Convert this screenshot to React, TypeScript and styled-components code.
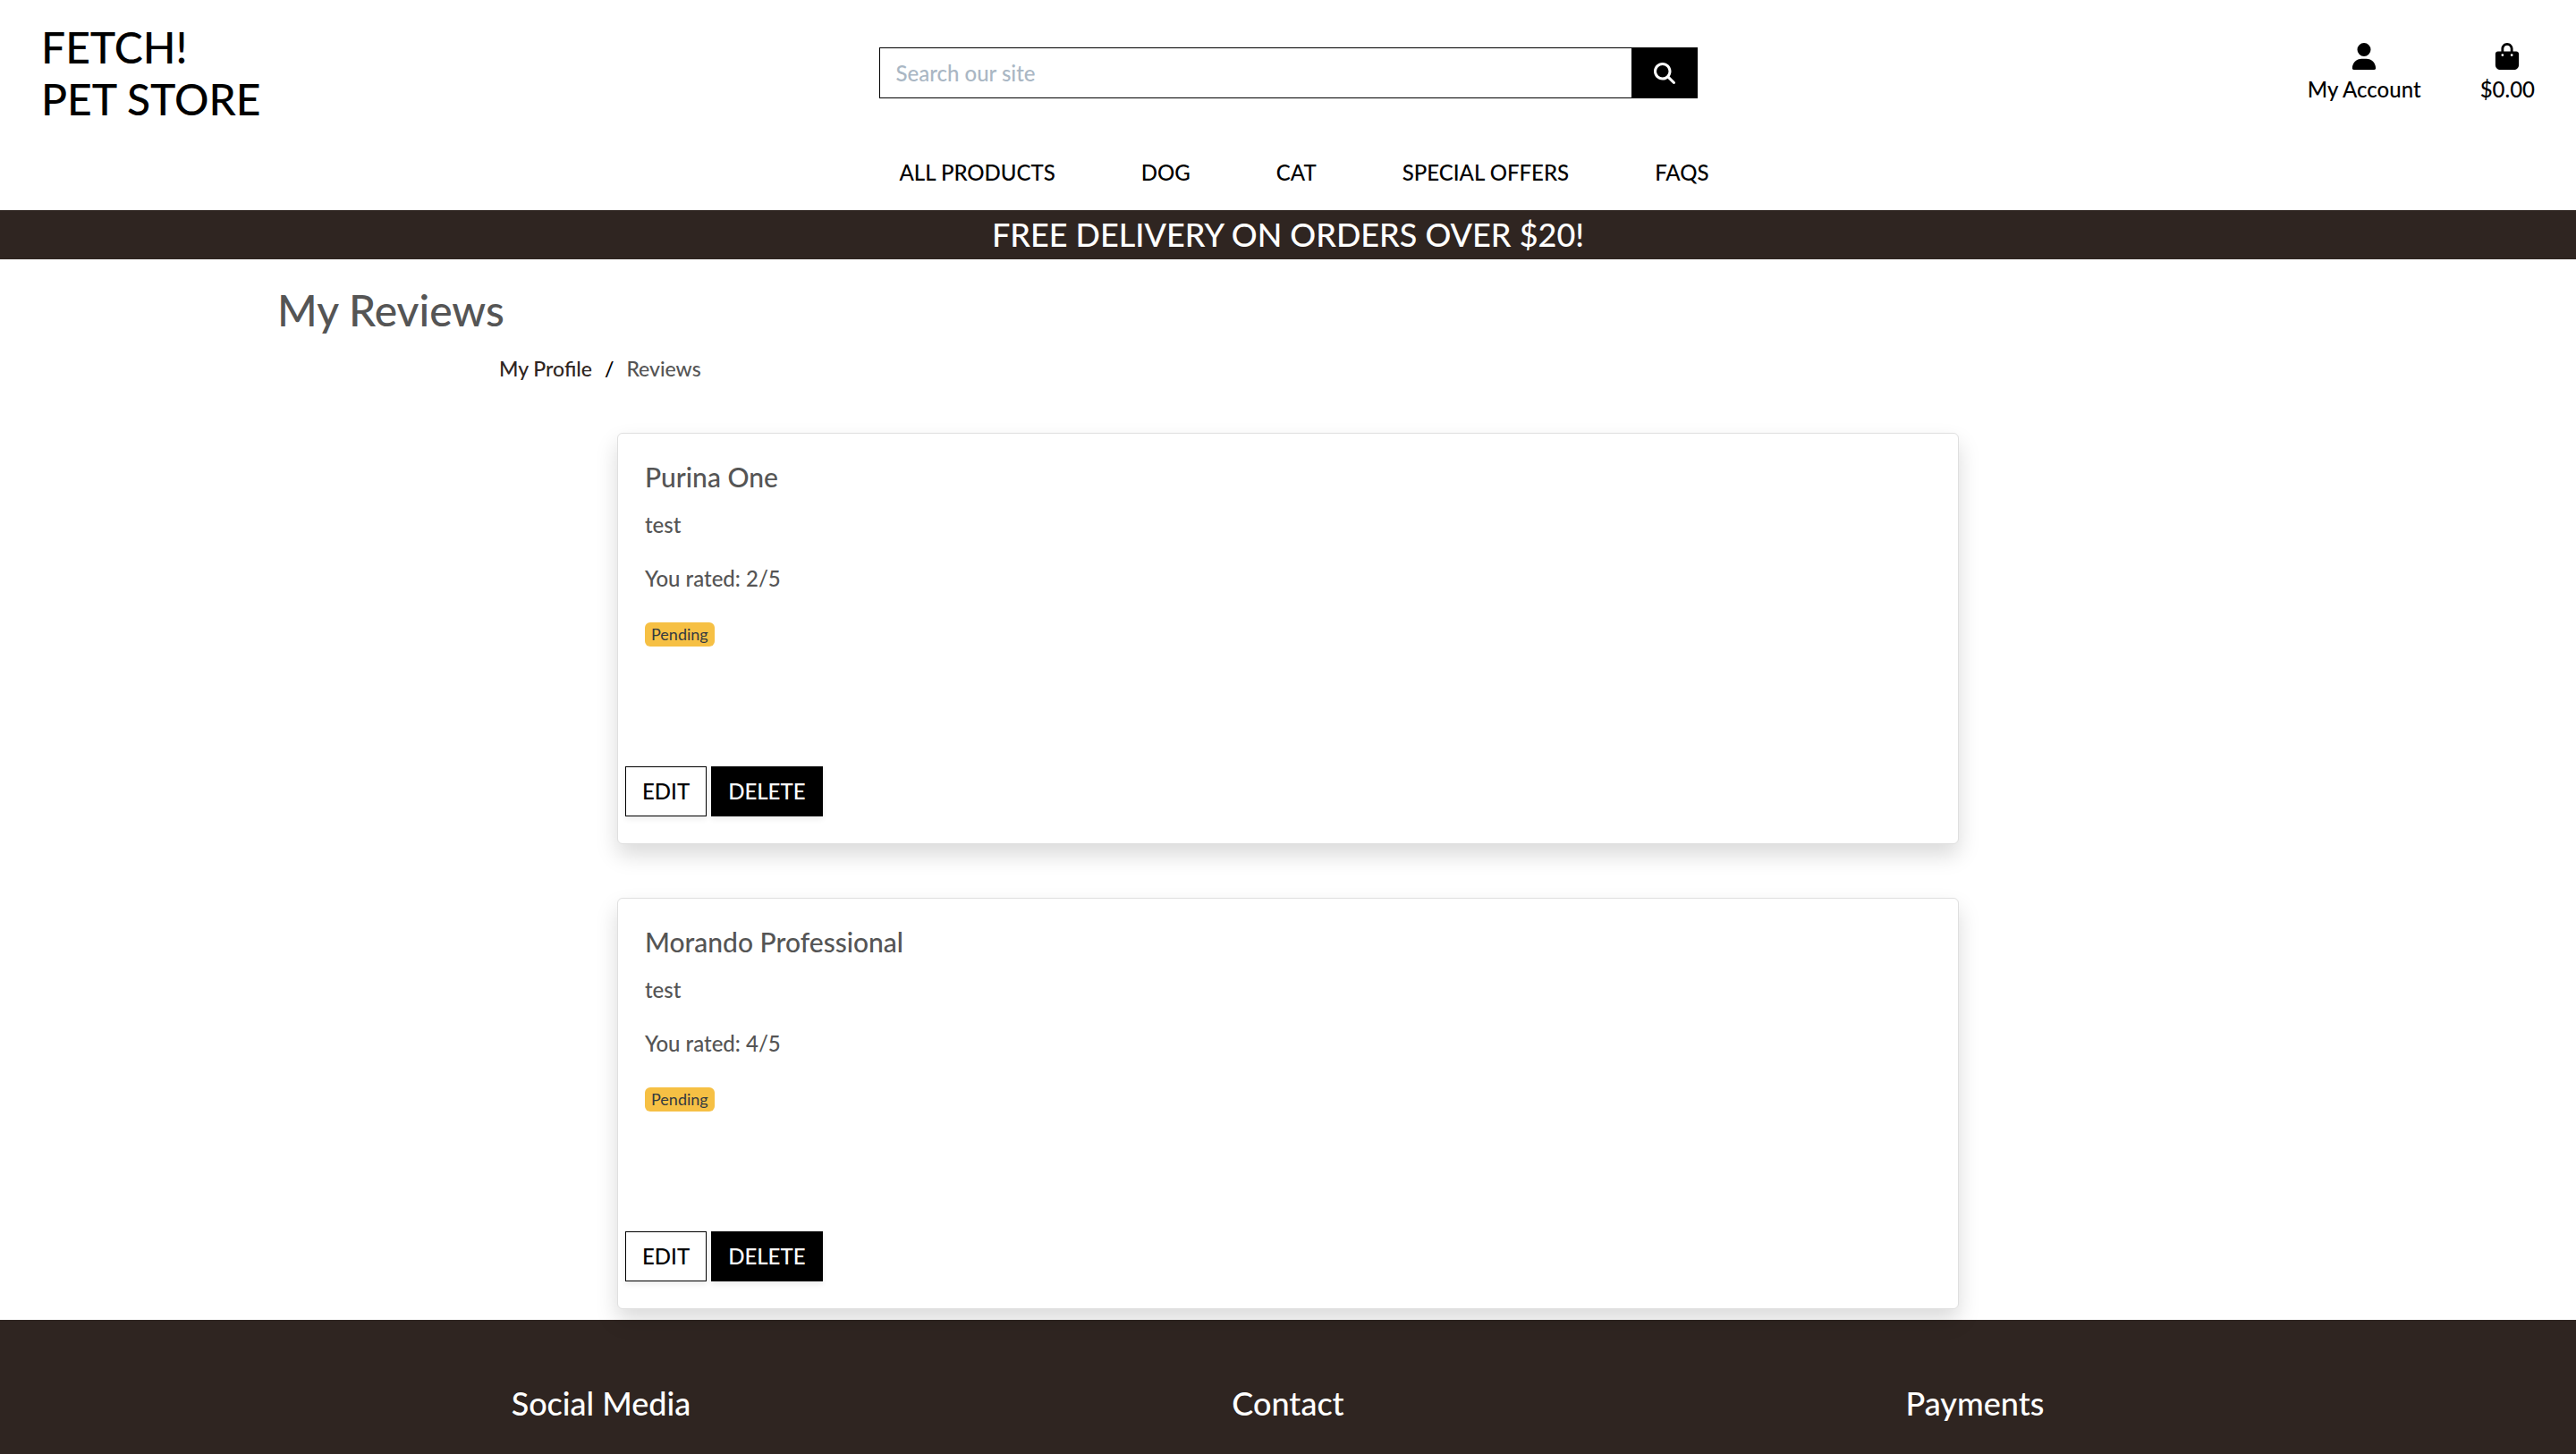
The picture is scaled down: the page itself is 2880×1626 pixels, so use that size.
import React from "react";
import styled, { createGlobalStyle } from "styled-components";
import { FaUser, FaBagShopping, FaMagnifyingGlass } from "react-icons/fa6";

const GlobalStyle = createGlobalStyle`
  *, *::before, *::after { box-sizing: border-box; }
  body {
    margin: 0;
    background: #fff;
    color: #555;
    font-family: Lato, "Open Sans", sans-serif;
    font-size: 24px;
    font-weight: 500;
    line-height: 36px;
  }
  h1, h2, h3, p, ul, ol { margin: 0; padding: 0; font-weight: inherit; }
  ul, ol { list-style: none; }
  a { color: inherit; text-decoration: none; }
  button, input { font: inherit; border-radius: 0; margin: 0; }
`;

const Page = styled.div`
  display: flex;
  flex-direction: column;
  min-height: 100vh;
`;

const Header = styled.header`
  display: flex;
  flex-direction: column;
  color: #000;
`;

const TopRow = styled.div`
  display: grid;
  grid-template-columns: 1fr minmax(300px, 915px) 1fr;
  align-items: start;
  padding: 24px 46px 0;
`;

const Brand = styled.a`
  justify-self: start;
  font-size: 48px;
  line-height: 58px;
`;

const SearchForm = styled.form`
  display: flex;
  height: 57px;
  margin-top: 29px;
`;

const SearchInput = styled.input`
  flex: 1;
  min-width: 0;
  padding: 9px 18px;
  border: 1px solid #000;
  border-right: 0;
  background: #fff;
  color: #495057;
  outline: none;
  &::placeholder {
    color: #aab7c4;
    opacity: 1;
  }
`;

const SearchButton = styled.button`
  display: flex;
  align-items: center;
  justify-content: center;
  width: 74px;
  padding: 0;
  border: 1px solid #000;
  background: #000;
  color: #fff;
  cursor: pointer;
`;

const UserLinks = styled.div`
  display: flex;
  justify-self: end;
  gap: 66px;
  padding-top: 24px;
`;

const UserLink = styled.a`
  display: flex;
  flex-direction: column;
  align-items: center;
  gap: 4px;
`;

const Nav = styled.nav`
  padding: 35px 0 24px 36px;
`;

const NavList = styled.ul`
  display: flex;
  justify-content: center;
  gap: 96px;
`;

const Banner = styled.p`
  padding: 6px;
  background: #2f2521;
  color: #fff;
  font-size: 36px;
  line-height: 43px;
  text-align: center;
`;

const Main = styled.main`
  display: flex;
  flex-direction: column;
  flex: 1;
  padding: 28px 0 12px;
`;

const PageTitle = styled.h1`
  margin-left: 310px;
  font-size: 48px;
  line-height: 58px;
`;

const Crumbs = styled.ol`
  display: flex;
  gap: 14px;
  margin: 18px 0 54px 558px;
  font-size: 23px;
`;

const Crumb = styled.li<{ $color?: string }>`
  color: ${(p) => p.$color ?? "inherit"};
`;

const Reviews = styled.section`
  display: flex;
  flex-direction: column;
  gap: 60px;
  width: 100%;
  max-width: 1500px;
  margin: 0 auto;
`;

const Card = styled.article`
  position: relative;
  padding-bottom: 30px;
  border: 1px solid #dfdfdf;
  border-radius: 6px;
  background: #fff;
  box-shadow: 0 12px 24px rgba(0, 0, 0, 0.15);
`;

const CardBody = styled.div`
  display: flex;
  flex-direction: column;
  align-items: flex-start;
  gap: 24px;
  min-height: 372px;
  padding: 30px;
`;

const CardTitle = styled.h2`
  margin-bottom: -6px;
  font-size: 30px;
`;

const Badge = styled.span`
  margin-top: 7px;
  padding: 4px 7px 5px;
  border-radius: 6px;
  background: #f6c044;
  color: #343a40;
  font-size: 18px;
  font-weight: 400;
  line-height: 18px;
`;

const Actions = styled.div`
  display: flex;
  gap: 5px;
  padding-left: 8px;
`;

const ActionButton = styled.button<{ $solid?: boolean }>`
  padding: 9px 18px;
  border: 1px solid #000;
  background: ${(p) => (p.$solid ? "#000" : "#fff")};
  color: ${(p) => (p.$solid ? "#fff" : "#000")};
  line-height: 36px;
  box-shadow: 0 3px 6px rgba(0, 0, 0, 0.075);
  cursor: pointer;
`;

const Footer = styled.footer`
  display: grid;
  grid-template-columns: repeat(3, 1fr);
  padding: 72px 10% 36px;
  background: #2f2521;
  color: #fff;
  text-align: center;
`;

const FooterTitle = styled.h3`
  font-size: 36px;
  line-height: 43px;
`;

const navItems = ["ALL PRODUCTS", "DOG", "CAT", "SPECIAL OFFERS", "FAQS"];
const footerItems = ["Social Media", "Contact", "Payments"];
const reviews = [
  { product: "Purina One", text: "test", rating: 2 },
  { product: "Morando Professional", text: "test", rating: 4 },
];

export default function App() {
  return (
    <Page>
      <GlobalStyle />
      <Header>
        <TopRow>
          <Brand href="#">
            FETCH!
            <br />
            PET STORE
          </Brand>
          <SearchForm role="search" onSubmit={(e) => e.preventDefault()}>
            <SearchInput type="text" aria-label="Search our site" placeholder="Search our site" />
            <SearchButton type="submit" aria-label="Search">
              <FaMagnifyingGlass size={24} />
            </SearchButton>
          </SearchForm>
          <UserLinks>
            <UserLink href="#">
              <FaUser size={30} />
              My Account
            </UserLink>
            <UserLink href="#">
              <FaBagShopping size={30} />
              $0.00
            </UserLink>
          </UserLinks>
        </TopRow>
        <Nav>
          <NavList>
            {navItems.map((item) => (
              <li key={item}>
                <a href="#">{item}</a>
              </li>
            ))}
          </NavList>
        </Nav>
      </Header>
      <Banner>FREE DELIVERY ON ORDERS OVER $20!</Banner>
      <Main>
        <PageTitle>My Reviews</PageTitle>
        <nav aria-label="Breadcrumb">
          <Crumbs>
            <Crumb $color="#2f2521">
              <a href="#">My Profile</a>
            </Crumb>
            <Crumb $color="#000" aria-hidden="true">
              /
            </Crumb>
            <Crumb aria-current="page">Reviews</Crumb>
          </Crumbs>
        </nav>
        <Reviews>
          {reviews.map((review) => (
            <Card key={review.product}>
              <CardBody>
                <CardTitle>{review.product}</CardTitle>
                <p>{review.text}</p>
                <p>You rated: {review.rating}/5</p>
                <Badge>Pending</Badge>
              </CardBody>
              <Actions>
                <ActionButton type="button">EDIT</ActionButton>
                <ActionButton type="button" $solid>
                  DELETE
                </ActionButton>
              </Actions>
            </Card>
          ))}
        </Reviews>
      </Main>
      <Footer>
        {footerItems.map((item) => (
          <FooterTitle key={item}>{item}</FooterTitle>
        ))}
      </Footer>
    </Page>
  );
}
